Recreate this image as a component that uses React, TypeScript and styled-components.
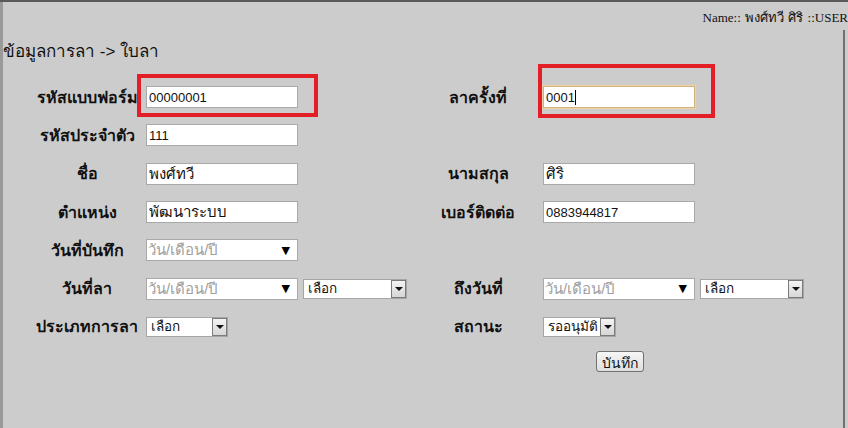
import React from "react";
import styled, { createGlobalStyle } from "styled-components";

const GlobalStyle = createGlobalStyle`
  html, body {
    margin: 0;
    padding: 0;
    background: #cccccc;
  }
  body {
    width: 848px;
    height: 428px;
    overflow: hidden;
    font-family: Tahoma, "Liberation Sans", "Noto Sans", sans-serif;
  }
`;

interface FieldProps {
  label: string;
  children: React.ReactNode;
}

function Field({ label, children }: FieldProps): React.ReactElement {
  return (
    <>
      <Label>{label}</Label>
      <Control>{children}</Control>
    </>
  );
}

function DateBox(): React.ReactElement {
  return (
    <DateField>
      <Placeholder>วัน/เดือน/ปี</Placeholder>
      <DateArrow>▼</DateArrow>
    </DateField>
  );
}

function Dropdown({ value, width }: { value: string; width: number }): React.ReactElement {
  return (
    <SelectBox width={width}>
      <SelectText>{value}</SelectText>
      <ArrowButton>
        <Triangle />
      </ArrowButton>
    </SelectBox>
  );
}

export default function App(): React.ReactElement {
  return (
    <Page>
      <GlobalStyle />
      <TopBar />
      <UserName>Name:: พงศ์ทวี ศิริ ::USER</UserName>
      <Body>
        <Breadcrumb>ข้อมูลการลา -&gt; ใบลา</Breadcrumb>
        <FormGrid>
          <Field label="รหัสแบบฟอร์ม">
            <Highlight>
              <TextInput defaultValue="00000001" />
              <RedBox top={-12} left={-9} width={181} height={43} />
            </Highlight>
          </Field>
          <RightLabel>ลาครั้งที่</RightLabel>
          <Control>
            <Highlight>
              <TextInput defaultValue="0001" focused />
              <Caret />
              <RedBox top={-22} left={-5} width={177} height={54} />
            </Highlight>
          </Control>

          <Field label="รหัสประจำตัว">
            <TextInput defaultValue="111" />
          </Field>
          <Empty />
          <Empty />

          <Field label="ชื่อ">
            <TextInput defaultValue="พงศ์ทวี" thai />
          </Field>
          <RightLabel>นามสกุล</RightLabel>
          <Control>
            <TextInput defaultValue="ศิริ" thai />
          </Control>

          <Field label="ตำแหน่ง">
            <TextInput defaultValue="พัฒนาระบบ" thai />
          </Field>
          <RightLabel>เบอร์ติดต่อ</RightLabel>
          <Control>
            <TextInput defaultValue="0883944817" />
          </Control>

          <Field label="วันที่บันทึก">
            <DateBox />
          </Field>
          <Empty />
          <Empty />

          <Field label="วันที่ลา">
            <DateBox />
            <Dropdown value="เลือก" width={104} />
          </Field>
          <RightLabel>ถึงวันที่</RightLabel>
          <Control>
            <DateBox />
            <Dropdown value="เลือก" width={104} />
          </Control>

          <Field label="ประเภทการลา">
            <Dropdown value="เลือก" width={82} />
          </Field>
          <RightLabel>สถานะ</RightLabel>
          <Control>
            <Dropdown value="รออนุมัติ" width={73} />
          </Control>
        </FormGrid>
        <Actions>
          <SaveButton>บันทึก</SaveButton>
        </Actions>
      </Body>
    </Page>
  );
}

// Styled components
const Page = styled.div`
  position: relative;
  width: 848px;
  height: 428px;
  background: #cccccc;
  border-left: 3px solid #9a9a9a;
  box-sizing: border-box;
`;

const TopBar = styled.div`
  height: 2px;
  margin-left: -3px;
  background: #5a5a5a;
`;

const UserName = styled.div`
  font-family: "Liberation Serif", "Times New Roman", serif;
  font-size: 13px;
  color: #111;
  text-align: right;
  white-space: nowrap;
  padding-top: 8px;
  height: 20px;
  line-height: 16px;
  word-spacing: 1px;
`;

const Body = styled.div`
  border-right: 2px solid #707070;
  margin-right: 3px;
  height: 406px;
  box-sizing: border-box;
`;

const Breadcrumb = styled.div`
  font-size: 17px;
  color: #111;
  padding: 11px 0 0 0;
  height: 37px;
  line-height: 21px;
  box-sizing: border-box;
`;

const FormGrid = styled.div`
  display: grid;
  grid-template-columns: 116px 274px 123px 1fr;
  grid-auto-rows: 38.3px;
  padding-left: 27px;
  margin-top: 11px;
`;

const Label = styled.div`
  display: flex;
  align-items: center;
  justify-content: center;
  padding-right: 2px;
  font-size: 16px;
  font-weight: bold;
  color: #111;
  white-space: nowrap;
`;

const RightLabel = styled(Label)`
  padding-right: 7px;
`;

const Control = styled.div`
  display: flex;
  align-items: center;
  gap: 5px;
`;

const Empty = styled.div``;

const Highlight = styled.div`
  position: relative;
  display: flex;
  align-items: center;
`;

const TextInput = styled.input<{ focused?: boolean; thai?: boolean }>`
  width: 152px;
  height: 22px;
  box-sizing: border-box;
  border: 1px solid ${({ focused }) => (focused ? "#d2b27c" : "#a9a9a9")};
  box-shadow: ${({ focused }) => (focused ? "0 0 1px 1px #e9d3a7" : "none")};
  background: #fff;
  padding: 1px 2px;
  font-family: Tahoma, "Liberation Sans", sans-serif;
  font-size: ${({ thai }) => (thai ? "15px" : "13px")};
  color: #111;
  outline: none;
`;

const Caret = styled.span`
  position: absolute;
  left: 32px;
  top: 4px;
  width: 1px;
  height: 15px;
  background: #000;
`;

const RedBox = styled.div<{ top: number; left: number; width: number; height: number }>`
  position: absolute;
  top: ${({ top }) => top}px;
  left: ${({ left }) => left}px;
  width: ${({ width }) => width}px;
  height: ${({ height }) => height}px;
  border: 4px solid #e31e26;
  box-sizing: border-box;
  pointer-events: none;
`;

const DateField = styled.div`
  width: 152px;
  height: 22px;
  box-sizing: border-box;
  border: 1px solid #a9a9a9;
  background: #fff;
  display: flex;
  align-items: center;
  justify-content: space-between;
  padding: 0 7px 0 1px;
`;

const Placeholder = styled.span`
  font-size: 15px;
  color: #a0a0a0;
`;

const DateArrow = styled.span`
  font-family: "DejaVu Sans", sans-serif;
  font-size: 11px;
  color: #000;
`;

const SelectBox = styled.div<{ width: number }>`
  width: ${({ width }) => width}px;
  height: 20px;
  box-sizing: border-box;
  border: 1px solid #a5a5a5;
  background: #fff;
  display: flex;
  align-items: stretch;
`;

const SelectText = styled.span`
  flex: 1;
  font-size: 13.5px;
  color: #111;
  padding-left: 4px;
  line-height: 18px;
  white-space: nowrap;
  overflow: hidden;
`;

const ArrowButton = styled.span`
  width: 15px;
  flex-shrink: 0;
  border: 1px solid #7b7b7b;
  background: linear-gradient(#f4f4f4, #d6d6d6);
  display: flex;
  align-items: center;
  justify-content: center;
  box-sizing: border-box;
`;

const Triangle = styled.span`
  width: 0;
  height: 0;
  border-left: 4px solid transparent;
  border-right: 4px solid transparent;
  border-top: 4px solid #111;
`;

const Actions = styled.div`
  display: flex;
  padding-left: 593px;
  margin-top: 5px;
`;

const SaveButton = styled.button`
  height: 21px;
  padding: 0 5px;
  font-family: Tahoma, "Liberation Sans", sans-serif;
  font-size: 14px;
  color: #111;
  border: 1px solid #707070;
  border-radius: 3px;
  background: linear-gradient(#f6f6f6, #dedede);
`;
